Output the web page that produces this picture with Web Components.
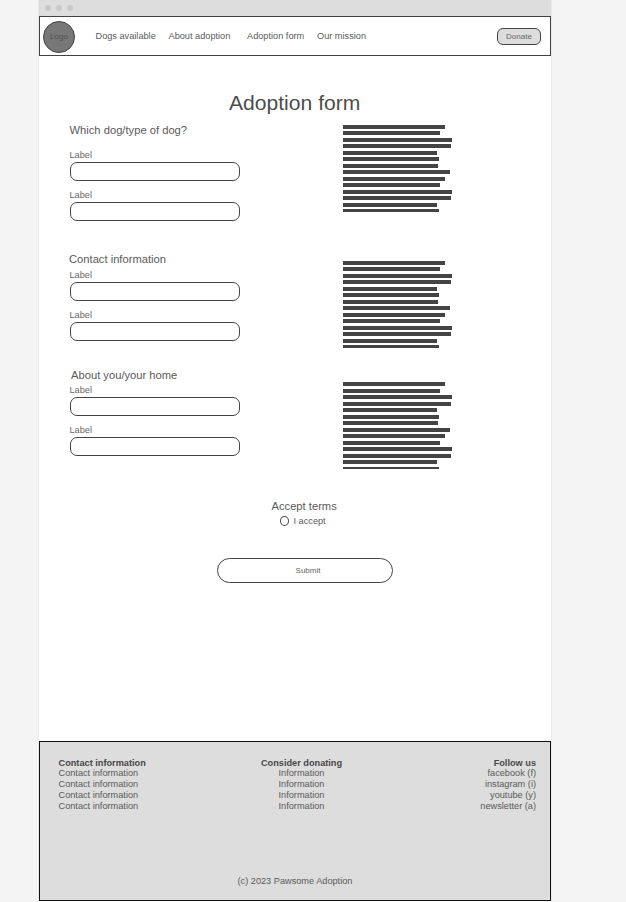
<!DOCTYPE html>
<html lang="en">
<head>
<meta charset="utf-8">
<title>Adoption form</title>
<style>
html{background:#f4f4f4}
body{margin:0;height:902px;overflow:hidden;font-family:"Liberation Sans",Arial,sans-serif;font-size:9.2px;line-height:12px;color:#5a5a5a}
</style>
</head>
<body>
<browser-frame>
  <site-nav></site-nav>
  <adoption-form></adoption-form>
  <site-footer></site-footer>
</browser-frame>
<script>
class Base extends HTMLElement{
  constructor(){
    super();
    this.attachShadow({mode:'open'}).innerHTML='<style>*{box-sizing:border-box}:host{box-sizing:border-box}</style>'+this.view();
  }
}

class BrowserFrame extends Base{
  view(){return `<style>
    :host{display:flex;flex-direction:column;width:512px;height:902px;margin-left:39px;background:#fff;box-shadow:0 0 0 1px #e8e8e8}
    .bar{height:16px;flex:none;background:#ddd;display:flex;align-items:center;gap:5px;padding-left:6px}
    i{width:6px;height:6px;border-radius:50%;background:#cacaca}
    </style><div class="bar"><i></i><i></i><i></i></div><slot></slot>`}
}

class SiteNav extends Base{
  view(){return `<style>
    :host{display:flex;align-items:center;flex:none;height:40px;border:1px solid #444;padding:0 9px 0 3px}
    .logo{width:32px;height:32px;border-radius:50%;background:#777;border:1px solid #444;margin-top:2px;display:flex;justify-content:center;padding-top:9px;font-size:8.1px;line-height:11px;color:#505050}
    nav{display:flex;margin-left:20.5px;flex:1;white-space:nowrap}
    nav span:nth-child(1){width:73px}
    nav span:nth-child(2){width:78.5px}
    nav span:nth-child(3){width:70px}
    button{all:unset;box-sizing:border-box;width:44px;height:17px;border:1px solid #444;border-radius:6px;background:#ddd;font-size:8px;line-height:15px;text-align:center;margin-top:1px;color:#666}
    </style><div class="logo">Logo</div>
    <nav><span>Dogs available</span><span>About adoption</span><span>Adoption form</span><span>Our mission</span></nav>
    <button>Donate</button>`}
}

class TextField extends Base{
  view(){return `<style>
    :host{display:block;width:170px}
    label{display:block;height:13px;margin-left:-.5px;color:#666}
    .box{height:19px;border:1px solid #444;border-radius:7px;background:#fff}
    </style><label><slot></slot></label><div class="box"></div>`}
}

class TextBars extends Base{
  view(){
    const w=[102,97,109,108,94,96,95,107,102,97,109,108,94,96];
    return `<style>
    :host{display:block}
    i{display:block;height:4px;background:#444}
    i:nth-child(odd){margin-bottom:var(--odd-gap,2px)}
    i:nth-child(even){margin-bottom:var(--even-gap,3px)}
    i:last-child{height:var(--last,3px);margin-bottom:0}
    </style><div>${w.map(x=>`<i style="width:${x}px"></i>`).join('')}</div>`}
}

class FormSection extends Base{
  view(){return `<style>
    :host{display:grid;grid-template-columns:273px 1fr;margin-left:31px;height:var(--h)}
    .l{padding-top:var(--top)}
    h2{margin:0 0 var(--gap) var(--dx,0);font-weight:400;font-size:11.2px;line-height:14px;height:14px}
    .f{display:flex;flex-direction:column;gap:8px}
    text-bars{margin-top:var(--bars)}
    </style><div class="l"><h2><slot></slot></h2>
    <div class="f"><text-field>Label</text-field><text-field>Label</text-field></div></div>
    <text-bars></text-bars>`}
}

class AdoptionForm extends Base{
  view(){return `<style>
    :host{display:block;height:685px;padding-top:35px}
    h1{margin:0;font-weight:400;font-size:21.1px;line-height:24px;height:24px;padding-left:190px;color:#4c4c4c}
    .a{--h:106px;--top:8px;--gap:12px;--bars:10px;--dx:-.5px}
    .b{--h:120px;--top:31px;--gap:3px;--bars:40px;--dx:-1px}
    .c{--h:128px;--top:27px;--gap:2px;--bars:41px;--dx:1px;--odd-gap:3px;--even-gap:2px;--last:2px}
    h2{margin:30px 0 2px 232.5px;font-weight:400;font-size:11.2px;line-height:14px;height:14px}
    .r{display:flex;margin-left:241px;height:12px;gap:4.5px}
    .r i{width:9px;height:10px;margin-top:1px;border:1px solid #444;border-radius:50%}
    button{all:unset;box-sizing:border-box;display:block;width:176px;height:25px;margin:31px 0 0 178px;padding-left:6px;border:1px solid #444;border-radius:13px;text-align:center;font-size:8px;line-height:23px;color:#666}
    </style><h1>Adoption form</h1>
    <form-section class="a">Which dog/type of dog?</form-section>
    <form-section class="b">Contact information</form-section>
    <form-section class="c">About you/your home</form-section>
    <h2>Accept terms</h2><div class="r"><i></i><span>I accept</span></div>
    <button>Submit</button>`}
}

class FooterColumn extends Base{
  view(){return `<style>
    :host{display:block;line-height:11px;white-space:nowrap}
    b{display:block;color:#484848;height:10px}
    ::slotted(div){height:11px}
    </style><b>${this.getAttribute('heading')}</b><slot></slot>`}
}

class SiteFooter extends Base{
  view(){return `<style>
    :host{display:flex;flex-direction:column;flex:none;height:160px;border:1px solid #111;background:#ddd;padding:16px 14px 13px 18.5px}
    .cols{display:grid;grid-template-columns:160px 166px 1fr;flex:1}
    .m{text-align:center}.e{text-align:right}
    .copy{padding-left:179px;height:12px}
    </style><div class="cols">
    <footer-column heading="Contact information"><div>Contact information</div><div>Contact information</div><div>Contact information</div><div>Contact information</div></footer-column>
    <footer-column class="m" heading="Consider donating"><div>Information</div><div>Information</div><div>Information</div><div>Information</div></footer-column>
    <footer-column class="e" heading="Follow us"><div>facebook (f)</div><div>instagram (i)</div><div>youtube (y)</div><div>newsletter (a)</div></footer-column>
    </div><div class="copy">(c) 2023 Pawsome Adoption</div>`}
}

customElements.define('text-field',TextField);
customElements.define('text-bars',TextBars);
customElements.define('form-section',FormSection);
customElements.define('footer-column',FooterColumn);
customElements.define('site-nav',SiteNav);
customElements.define('adoption-form',AdoptionForm);
customElements.define('site-footer',SiteFooter);
customElements.define('browser-frame',BrowserFrame);
</script>
</body>
</html>
